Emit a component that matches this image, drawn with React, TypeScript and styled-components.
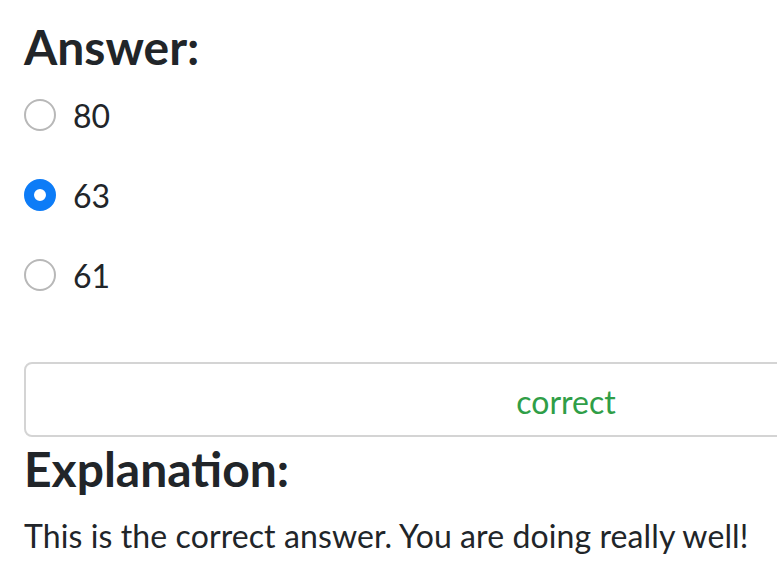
import React from "react";
import styled, { createGlobalStyle } from "styled-components";

const Global = createGlobalStyle`
  html, body {
    margin: 0;
    padding: 0;
    background: #ffffff;
    overflow: hidden;
  }
  body {
    font-family: "Lato", "Open Sans", sans-serif;
    color: #212529;
  }
`;

const Page = styled.div`
  padding: 0 24px;
  width: 1200px;
`;

const Heading = styled.h3<{ $top: number; $bottom: number }>`
  font-size: 48px;
  font-weight: 700;
  line-height: 58px;
  margin: ${(p) => p.$top}px 0 ${(p) => p.$bottom}px;
`;

const Options = styled.div`
  display: flex;
  flex-direction: column;
  gap: 32px;
`;

const Option = styled.label`
  display: flex;
  align-items: center;
  height: 48px;
  gap: 17px;
  font-size: 32px;
  cursor: pointer;
`;

const Radio = styled.span<{ $checked: boolean }>`
  box-sizing: border-box;
  width: 32px;
  height: 32px;
  border-radius: 50%;
  border: ${(p) => (p.$checked ? "10px solid #0d7cf7" : "2px solid #b8b8b8")};
  background: #ffffff;
  flex-shrink: 0;
`;

const ResultBox = styled.div`
  box-sizing: border-box;
  margin-top: 63px;
  width: 1084px;
  height: 75px;
  padding-top: 3px;
  border: 2px solid #d4d4d4;
  border-radius: 8px;
  display: flex;
  align-items: center;
  justify-content: center;
  color: #2f9e47;
  font-size: 32px;
`;

const Text = styled.p`
  margin: 0;
  font-size: 32px;
  line-height: 48px;
  letter-spacing: 0.1px;
`;

const options = [
  { value: "80", checked: false },
  { value: "63", checked: true },
  { value: "61", checked: false },
];

export default function App() {
  return (
    <>
      <Global />
      <Page>
        <Heading $top={18} $bottom={15}>Answer:</Heading>
        <Options>
          {options.map((o) => (
            <Option key={o.value}>
              <Radio $checked={o.checked} />
              {o.value}
            </Option>
          ))}
        </Options>
        <ResultBox>correct</ResultBox>
        <Heading $top={3} $bottom={14}>Explanation:</Heading>
        <Text>This is the correct answer. You are doing really well!</Text>
      </Page>
    </>
  );
}
